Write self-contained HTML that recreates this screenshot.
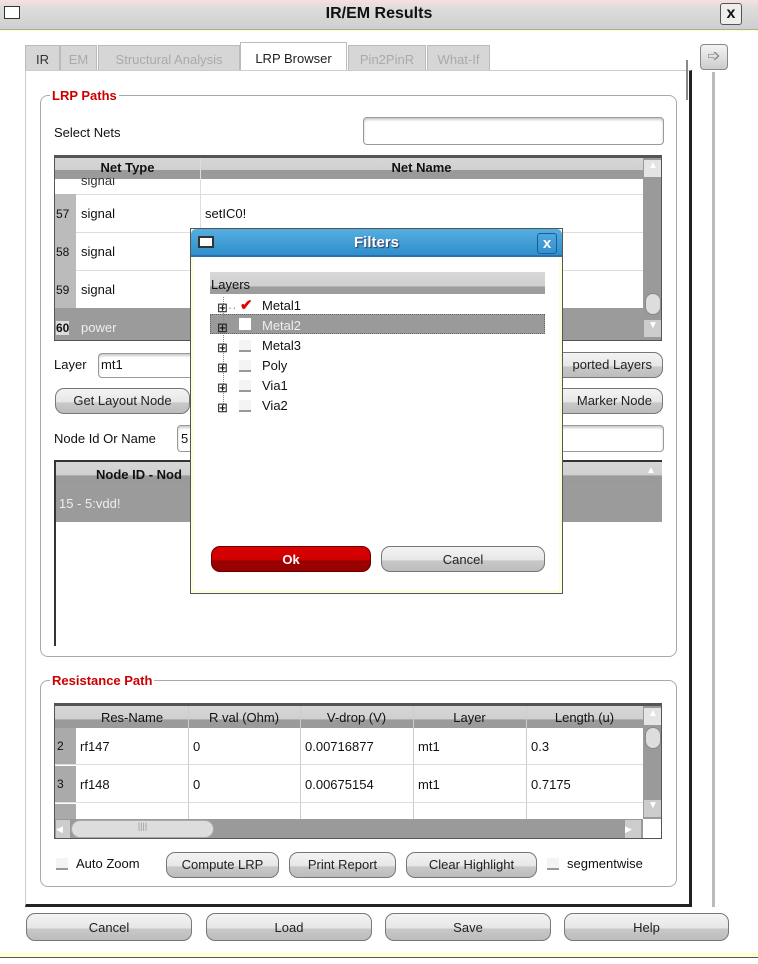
<!DOCTYPE html>
<html><head><style>
*{box-sizing:border-box;margin:0;padding:0}
body{width:758px;height:964px;background:#fff;font-family:"Liberation Sans",sans-serif;font-size:13px;color:#111;position:relative;overflow:hidden}
.a{position:absolute}
.btn{position:absolute;border:1px solid #777;border-radius:9px;background:linear-gradient(#f4f4f4 0,#e6e6e6 55%,#c8c8c8 56%,#bdbdbd 100%);text-align:center;font-size:13px;color:#222}
.inp{position:absolute;border:1px solid #999;border-radius:4px;background:#fff;box-shadow:inset 0 2px 2px #ccc}
.grp{position:absolute;border:1px solid #aaa;border-radius:8px}
.lbl{position:absolute;background:#fff;color:#c00;font-weight:bold;font-size:13px;padding:0 2px}
.hdr{position:absolute;background:linear-gradient(#d6d6d6 0,#d0d0d0 60%,#9a9a9a 61%,#9a9a9a 100%);font-weight:bold;text-align:center}
.cell{position:absolute;font-size:13px}
.num{position:absolute;background:#9a9a9a;width:21px;font-size:12px;color:#224}
.hl{position:absolute;height:1px;background:#ddd}
.vl{position:absolute;width:1px;background:#ddd}
.cb{position:absolute;width:12px;height:12px;border-bottom:2px solid #999;background:#f4f4f4}
.tab{position:absolute;top:45px;height:25px;border:1px solid #bbb;border-bottom:none;background:#d6d6d6;color:#aaa;font-size:13px;text-align:center;line-height:28px}
</style></head><body>
<!-- title bar -->
<div class="a" style="left:0;top:0;width:758px;height:30px;background:linear-gradient(#f6e0e0 0,#dcdcdc 30%,#cfcfcf 100%);border-bottom:1px solid #aaa"></div>
<div class="a" style="left:0;top:30px;width:758px;height:1px;background:#ffffc0"></div>
<div class="a" style="left:4px;top:6px;width:16px;height:13px;border:1px solid #333;background:#fff"></div>
<div class="a" style="left:0;top:5px;width:758px;text-align:center;font-weight:bold;font-size:16px">IR/EM Results</div>
<div class="a" style="left:720px;top:3px;width:22px;height:22px;border:1px solid #555;border-radius:3px;background:#eee;font-weight:bold;font-size:16px;text-align:center;line-height:20px">x</div>
<!-- tabs -->
<div class="tab" style="left:25px;width:35px;color:#333">IR</div>
<div class="tab" style="left:60px;width:37px">EM</div>
<div class="tab" style="left:98px;width:142px">Structural Analysis</div>
<div class="tab" style="left:240px;width:107px;background:#fff;color:#222;top:42px;height:28px;line-height:32px">LRP Browser</div>
<div class="tab" style="left:348px;width:78px">Pin2PinR</div>
<div class="tab" style="left:427px;width:63px">What-If</div>
<!-- panel frame -->
<div class="a" style="left:25px;top:70px;width:667px;height:837px;border:1px solid #ccc;border-right:3px solid #222;border-bottom:3px solid #222"></div>
<div class="a" style="left:686px;top:60px;width:2px;height:40px;background:#888"></div>
<div class="a" style="left:712px;top:72px;width:3px;height:835px;background:#bbb"></div>
<div class="a" style="left:700px;top:44px;width:28px;height:26px;border:1px solid #888;border-radius:4px;background:linear-gradient(#f4f4f4,#ccc);text-align:center;color:#888;font-size:16px;line-height:24px">➩</div>

<!-- LRP Paths -->
<div class="grp" style="left:40px;top:95px;width:637px;height:562px"></div>
<div class="lbl" style="left:50px;top:88px">LRP Paths</div>
<div class="a" style="left:54px;top:125px">Select Nets</div>
<div class="inp" style="left:363px;top:117px;width:301px;height:28px"></div>
<!-- nets table -->
<div class="a" style="left:54px;top:155px;width:608px;height:186px;border:1px solid #555;border-top:3px solid #555;background:#fff;overflow:hidden">
 <div class="hdr" style="left:0;top:0;width:588px;height:22px"></div>
 <div class="cell" style="left:0;top:21px;width:588px;height:15px;background:#fff"></div>
 <div class="cell" style="left:26px;top:15px;color:#333">signal</div>
 <div class="a" style="left:0;top:0;width:588px;height:20px;background:linear-gradient(#d6d6d6 0,#d0d0d0 60%,#9a9a9a 61%)"></div>
 <div class="a" style="left:0;top:2px;width:145px;text-align:center;font-weight:bold">Net Type</div>
 <div class="a" style="left:145px;top:2px;width:443px;text-align:center;font-weight:bold">Net Name</div>
 <div class="vl" style="left:145px;top:0;height:150px"></div>
 <div class="hl" style="left:0;top:36px;width:588px"></div>
 <div class="hl" style="left:0;top:74px;width:588px"></div>
 <div class="hl" style="left:0;top:112px;width:588px"></div>
 <div class="num" style="left:0;top:36px;height:38px;background:#bbb"></div>
 <div class="num" style="left:0;top:74px;height:38px;background:#bbb"></div>
 <div class="num" style="left:0;top:112px;height:38px;background:#bbb"></div>
 <div class="a" style="left:0;top:150px;width:588px;height:36px;background:#9b9b9b"></div>
 <div class="cell" style="left:1px;top:49px;font-size:12px">57</div><div class="cell" style="left:26px;top:48px">signal</div><div class="cell" style="left:150px;top:48px">setIC0!</div>
 <div class="cell" style="left:1px;top:87px;font-size:12px">58</div><div class="cell" style="left:26px;top:86px">signal</div>
 <div class="cell" style="left:1px;top:125px;font-size:12px">59</div><div class="cell" style="left:26px;top:124px">signal</div>
 <div class="cell" style="left:1px;top:163px;font-size:12px;font-weight:bold;background:#ddd">60</div><div class="cell" style="left:26px;top:162px;color:#eee">power</div>
 <div class="a" style="left:588px;top:0;width:20px;height:186px;background:#9a9a9a"></div>
 <div class="a" style="left:589px;top:2px;width:18px;height:17px;background:#e4e4e4;color:#fff;text-align:center;font-size:10px">▲</div>
 <div class="a" style="left:590px;top:135px;width:16px;height:22px;border-radius:8px;background:#ddd;border:1px solid #888"></div>
 <div class="a" style="left:589px;top:162px;width:18px;height:17px;background:#ccc;color:#fff;text-align:center;font-size:10px">▼</div>
</div>
<div class="a" style="left:54px;top:357px">Layer</div>
<div class="inp" style="left:98px;top:353px;width:100px;height:25px;border-radius:4px 0 0 4px;padding:3px 2px">mt1</div>
<div class="btn" style="left:540px;top:352px;width:123px;height:26px;line-height:24px;text-align:right;padding-right:10px">ported Layers</div>
<div class="btn" style="left:55px;top:388px;width:135px;height:26px;line-height:24px">Get Layout Node</div>
<div class="btn" style="left:540px;top:388px;width:123px;height:26px;line-height:24px;text-align:right;padding-right:10px">Marker Node</div>
<div class="a" style="left:54px;top:431px">Node Id Or Name</div>
<div class="inp" style="left:177px;top:425px;width:487px;height:27px;padding:5px 3px">5</div>
<div class="a" style="left:54px;top:460px;width:608px;height:186px;border-left:2px solid #333;border-top:2px solid #333;background:#fff">
 <div class="a" style="left:0;top:0;width:606px;height:22px;background:linear-gradient(#d6d6d6 0,#d0d0d0 60%,#9a9a9a 61%)"></div>
 <div class="a" style="left:40px;top:5px;font-weight:bold">Node ID - Nod</div>
 <div class="a" style="left:590px;top:3px;color:#fff;font-size:10px">▲</div>
 <div class="a" style="left:0;top:22px;width:606px;height:38px;background:#9b9b9b"></div>
 <div class="a" style="left:3px;top:34px;color:#eee">15 - 5:vdd!</div>
</div>

<!-- Resistance Path -->
<div class="grp" style="left:40px;top:680px;width:637px;height:207px"></div>
<div class="lbl" style="left:50px;top:673px">Resistance Path</div>
<div class="a" style="left:54px;top:703px;width:608px;height:136px;border:1px solid #555;border-top:3px solid #555;background:#fff;overflow:hidden">
 <div class="a" style="left:0;top:0;width:588px;height:22px;background:linear-gradient(#d6d6d6 0,#d0d0d0 60%,#9a9a9a 61%)"></div>
 <div class="a" style="left:21px;top:4px;width:112px;text-align:center">Res-Name</div>
 <div class="a" style="left:133px;top:4px;width:112px;text-align:center">R val (Ohm)</div>
 <div class="a" style="left:245px;top:4px;width:113px;text-align:center">V-drop (V)</div>
 <div class="a" style="left:358px;top:4px;width:113px;text-align:center">Layer</div>
 <div class="a" style="left:471px;top:4px;width:117px;text-align:center">Length (u)</div>
 <div class="vl" style="left:133px;top:0;height:120px;background:#ccc"></div>
 <div class="vl" style="left:245px;top:0;height:120px;background:#ccc"></div>
 <div class="vl" style="left:358px;top:0;height:120px;background:#ccc"></div>
 <div class="vl" style="left:471px;top:0;height:120px;background:#ccc"></div>
 <div class="num" style="left:0;top:22px;height:36px;background:#aaa"></div>
 <div class="num" style="left:0;top:60px;height:36px;background:#aaa"></div>
 <div class="num" style="left:0;top:98px;height:30px;background:#aaa"></div>
 <div class="hl" style="left:0;top:58px;width:588px"></div>
 <div class="hl" style="left:0;top:96px;width:588px"></div>
 <div class="cell" style="left:2px;top:33px;font-size:12px">2</div><div class="cell" style="left:25px;top:33px">rf147</div><div class="cell" style="left:138px;top:33px">0</div><div class="cell" style="left:250px;top:33px">0.00716877</div><div class="cell" style="left:363px;top:33px">mt1</div><div class="cell" style="left:476px;top:33px">0.3</div>
 <div class="cell" style="left:2px;top:71px;font-size:12px">3</div><div class="cell" style="left:25px;top:71px">rf148</div><div class="cell" style="left:138px;top:71px">0</div><div class="cell" style="left:250px;top:71px">0.00675154</div><div class="cell" style="left:363px;top:71px">mt1</div><div class="cell" style="left:476px;top:71px">0.7175</div>
 <div class="a" style="left:588px;top:0;width:20px;height:113px;background:#9a9a9a"></div>
 <div class="a" style="left:589px;top:2px;width:18px;height:17px;background:#e4e4e4;color:#fff;text-align:center;font-size:10px">▲</div>
 <div class="a" style="left:590px;top:21px;width:16px;height:22px;border-radius:8px;background:#ddd;border:1px solid #888"></div>
 <div class="a" style="left:589px;top:94px;width:18px;height:17px;background:#ccc;color:#fff;text-align:center;font-size:10px">▼</div>
 <div class="a" style="left:0;top:113px;width:588px;height:20px;background:#9a9a9a"></div>
 <div class="a" style="left:1px;top:114px;width:14px;height:18px;background:#ccc;color:#fff;font-size:9px;line-height:18px">◀</div>
 <div class="a" style="left:16px;top:114px;width:143px;height:18px;border-radius:9px;background:#ddd;border:1px solid #aaa;text-align:center;font-size:9px;color:#999">||||</div>
 <div class="a" style="left:570px;top:114px;width:16px;height:18px;background:#ccc;color:#fff;font-size:9px;line-height:18px">▶</div>
</div>
<div class="cb" style="left:56px;top:858px"></div>
<div class="a" style="left:76px;top:856px">Auto Zoom</div>
<div class="btn" style="left:166px;top:852px;width:113px;height:26px;line-height:24px">Compute LRP</div>
<div class="btn" style="left:289px;top:852px;width:107px;height:26px;line-height:24px">Print Report</div>
<div class="btn" style="left:406px;top:852px;width:131px;height:26px;line-height:24px">Clear Highlight</div>
<div class="cb" style="left:547px;top:858px"></div>
<div class="a" style="left:567px;top:856px">segmentwise</div>

<!-- bottom buttons -->
<div class="btn" style="left:26px;top:913px;width:166px;height:28px;line-height:28px">Cancel</div>
<div class="btn" style="left:206px;top:913px;width:166px;height:28px;line-height:28px">Load</div>
<div class="btn" style="left:385px;top:913px;width:166px;height:28px;line-height:28px">Save</div>
<div class="btn" style="left:564px;top:913px;width:165px;height:28px;line-height:28px">Help</div>
<div class="a" style="left:0;top:953px;width:758px;height:4px;background:#ffffd0"></div>
<div class="a" style="left:0;top:957px;width:758px;height:1px;background:#555"></div>

<!-- Filters dialog -->
<div class="a" style="left:190px;top:228px;width:373px;height:366px;border:1px solid #555;background:#fff;box-shadow:inset 0 0 0 3px #fffde0"></div>
<div class="a" style="left:191px;top:229px;width:371px;height:28px;background:linear-gradient(#55aee0,#2f8fcc);border-radius:5px 5px 0 0;border-bottom:2px solid #2a6fb0"></div>
<div class="a" style="left:198px;top:236px;width:16px;height:12px;border:2px solid #333;background:#fff"></div>
<div class="a" style="left:191px;top:234px;width:371px;text-align:center;color:#fff;font-weight:bold;font-size:15px;text-shadow:1px 1px 1px #335">Filters</div>
<div class="a" style="left:537px;top:233px;width:20px;height:21px;border:1px solid #1d5c98;border-radius:3px;color:#fff;font-weight:bold;text-align:center;line-height:20px;font-size:15px">x</div>
<div class="a" style="left:210px;top:272px;width:335px;height:22px;background:linear-gradient(#d8d8d8 0,#cfcfcf 65%,#9d9d9d 66%);padding:5px 1px;font-size:13px">Layers</div>
<div class="a" style="left:210px;top:314px;width:335px;height:20px;background:#9a9a9a;border:1px dotted #666"></div>
<div class="a" style="left:223px;top:297px;width:1px;height:115px;border-left:1px dotted #888"></div>
<div class="a" style="left:217px;top:298px;font-size:13px;line-height:20px">
<div>⊞<span style="color:#999">·· </span></div><div>⊞</div><div>⊞</div><div>⊞</div><div>⊞</div><div>⊞</div>
</div>
<div class="a" style="left:240px;top:296px;color:#d00;font-size:15px;font-weight:bold">✔</div>
<div class="cb" style="left:239px;top:318px;background:#fff;height:14px"></div>
<div class="cb" style="left:239px;top:340px"></div>
<div class="cb" style="left:239px;top:360px"></div>
<div class="cb" style="left:239px;top:380px"></div>
<div class="cb" style="left:239px;top:400px"></div>
<div class="a" style="left:262px;top:296px;line-height:20px;font-size:13px">
<div>Metal1</div><div style="color:#eee">Metal2</div><div>Metal3</div><div>Poly</div><div>Via1</div><div>Via2</div>
</div>
<div class="btn" style="left:211px;top:546px;width:160px;height:26px;line-height:26px;background:linear-gradient(#d00 0,#c00 55%,#900 56%,#900 100%);border-color:#600;color:#fff;font-weight:bold">Ok</div>
<div class="btn" style="left:381px;top:546px;width:164px;height:26px;line-height:26px">Cancel</div>
</body></html>
